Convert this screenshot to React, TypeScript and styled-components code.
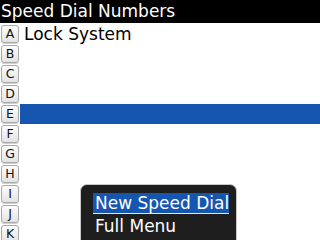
import React from "react";
import styled, { createGlobalStyle } from "styled-components";

const Global = createGlobalStyle`
  html, body { margin: 0; padding: 0; background: #fff; }
  body { width: 320px; height: 240px; overflow: hidden; font-family: "DejaVu Sans", sans-serif; }
`;

const Screen = styled.div`
  position: relative;
  width: 320px;
  height: 240px;
  overflow: hidden;
  background: #fff;
`;

const TitleBar = styled.div`
  height: 23px;
  background: #000;
  color: #fff;
  font-size: 17px;
  line-height: 22px;
  padding-left: 1px;
  margin-bottom: 1px;
  white-space: nowrap;
`;

const List = styled.div`
  display: flex;
  flex-direction: column;
`;

const Row = styled.div<{ $selected?: boolean }>`
  height: 20px;
  display: flex;
  align-items: center;
  background: ${(p) => (p.$selected ? "linear-gradient(to right, #fff 0, #fff 20px, #1756b0 20px)" : "#fff")};
`;

const Key = styled.div`
  box-sizing: border-box;
  width: 18px;
  height: 18px;
  margin-left: 1px;
  border: 1px solid #a8a8a8;
  border-radius: 3px;
  background: linear-gradient(#fdfdfd, #e3e3e3);
  box-shadow: 0 1px 0 #d0d0d0;
  display: flex;
  align-items: center;
  justify-content: center;
  font-size: 12.5px;
  color: #111;
  line-height: 1;
`;

const Label = styled.span`
  margin-left: 5px;
  font-size: 17px;
  color: #000;
`;

const Menu = styled.div`
  position: absolute;
  left: 80px;
  top: 184px;
  width: 157px;
  height: 70px;
  box-sizing: border-box;
  background: #1e1e1e;
  border: 1px solid #c8c8c8;
  border-radius: 7px;
  padding: 8px 0 0 12px;
  display: flex;
  flex-direction: column;
`;

const MenuItem = styled.div<{ $active?: boolean }>`
  width: 136px;
  height: 21px;
  box-sizing: border-box;
  padding-left: 2px;
  font-size: 17px;
  line-height: 20px;
  color: #fff;
  white-space: nowrap;
  background: ${(p) => (p.$active ? "#1756b0" : "transparent")};
  border-bottom: 1px solid ${(p) => (p.$active ? "#e8e8e8" : "transparent")};
  margin-bottom: 2px;
`;

const letters = ["A", "B", "C", "D", "E", "F", "G", "H", "I", "J", "K"];

export default function App() {
  return (
    <Screen>
      <Global />
      <TitleBar>Speed Dial Numbers</TitleBar>
      <List>
        {letters.map((l, i) => (
          <Row key={l} $selected={l === "E"}>
            <Key>{l}</Key>
            {i === 0 && <Label>Lock System</Label>}
          </Row>
        ))}
      </List>
      <Menu>
        <MenuItem $active>New Speed Dial</MenuItem>
        <MenuItem>Full Menu</MenuItem>
      </Menu>
    </Screen>
  );
}
